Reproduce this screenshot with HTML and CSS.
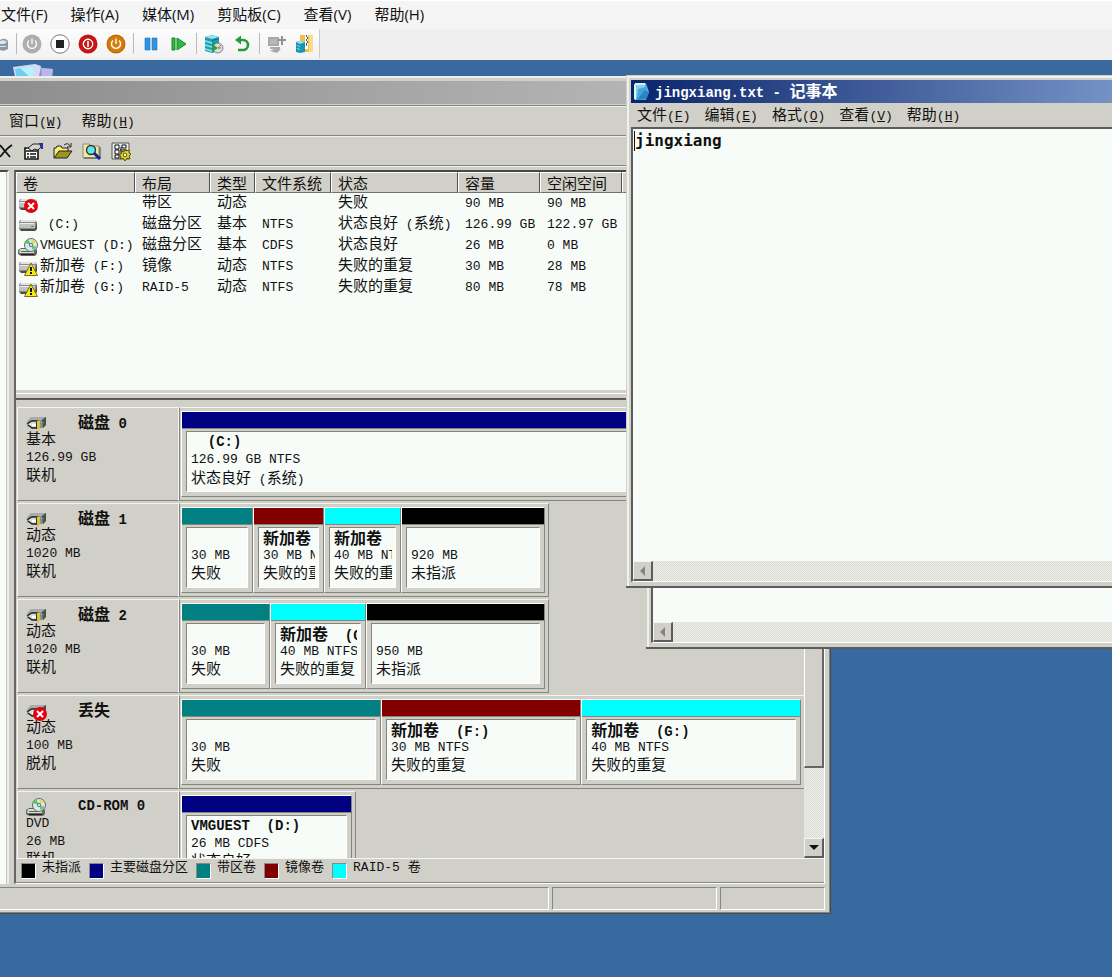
FILE: index.html
```html
<!DOCTYPE html>
<html lang="zh-CN">
<head>
<meta charset="utf-8">
<title>磁盘管理</title>
<link rel="stylesheet" href="styles.css">
</head>
<body>
<svg class="defs" aria-hidden="true">
  <symbol id="disk" viewBox="0 0 20 17">
    <path d="M2 3h15l2 2v7l-2 2H3l-2-2V5z" fill="#8a8a8a"/>
    <path d="M3 3h14l1 2H2z" fill="#e2e2e2"/>
    <path d="M1 6h16v5H2L1 10z" fill="#c2c2c2"/>
    <path d="M2 6h14v1H2z" fill="#efefef"/>
    <path d="M2 12h15l2-7v7l-2 2H3z" fill="#4b4b4b"/>
    <path d="M13 9h3v1h-3z" fill="#2fae3c"/>
  </symbol>
  <symbol id="hdd" viewBox="0 0 21 15">
    <path d="M5 1h15v8l-3 3H7l-6-2V6z" fill="#8d918d"/>
    <path d="M5 1h14l-3 3H3z" fill="#a9ada9"/>
    <path d="M16 4l4-3v8l-3 3z" fill="#4c4c4c"/>
    <path d="M1 8l5-3h7v6H6z" fill="#dcdedc"/>
    <path d="M1 8l5-3h6M2 9l4 3h5" fill="none" stroke="#222" stroke-width="1.300"/>
    <path d="M6 8h4v2H6z" fill="#fff"/>
    <path d="M11 5h3v8l-3 1z" fill="#d9c23c"/>
    <path d="M10 6h1v7h-1z" fill="#333"/>
    <path d="M15 6h3v1h-3z" fill="#54b260"/>
  </symbol>
  <symbol id="cd" viewBox="0 0 20 18">
    <path d="M3 10h14l2 2v4l-2 2H3l-3-2v-4z" fill="#666"/>
    <path d="M2 11h14v4H1z" fill="#d8d8d8"/>
    <path d="M3 13h9v1H3z" fill="#159c2e"/>
    <path d="M3 16h13v1H3z" fill="#222"/>
    <circle cx="13" cy="7" r="6.500" fill="#dfe7e4" stroke="#666"/>
    <path d="M13 7L7 5l3-4z" fill="#4dd05b"/>
    <path d="M13 7l1-6 4 3z" fill="#e9dc52"/>
    <path d="M13 7l6 2-4 4z" fill="#6fc47a"/>
    <circle cx="13" cy="7" r="2" fill="#3a6fc0"/>
    <circle cx="13" cy="7" r="1" fill="#fff"/>
  </symbol>
  <symbol id="error" viewBox="0 0 14 14">
    <circle cx="7" cy="7" r="7" fill="#e3000f"/>
    <path d="M4 4l6 6M10 4l-6 6" stroke="#fff" stroke-width="2"/>
  </symbol>
  <symbol id="warn" viewBox="0 0 14 14">
    <path d="M7 1l6.500 12.500H.5z" fill="#f6ea1b" stroke="#77730a"/>
    <path d="M6 5h2v4H6zM6 10h2v2H6z" fill="#111"/>
  </symbol>
</svg>

<header class="host">
  <nav class="host-menu">
    <button>文件(F)</button><button>操作(A)</button><button>媒体(M)</button><button>剪贴板(C)</button><button>查看(V)</button><button>帮助(H)</button>
  </nav>
  <div class="host-tools">
    <div class="host-strip">
      <button class="cut" aria-label="Ctrl+Alt+Del"><svg width="9" height="16" viewBox="0 0 9 16"><path d="M0 4q5-3 8 1v8q-4 3-8 1z" fill="#8b98a8"/><path d="M0 5q4-2 7 1l-3 2H0zM0 10h6v1H0z" fill="#dfe6ee"/></svg></button>
      <i class="sep"></i>
      <button aria-label="启动"><svg width="20" height="20" viewBox="0 0 20 20"><circle cx="10" cy="10" r="9.500" fill="#aeaeae"/><path d="M7 6.500a4.500 4.500 0 1 0 6 0M10 4.500V10" fill="none" stroke="#fff" stroke-width="1.300"/></svg></button>
      <button aria-label="强行关闭"><svg width="20" height="20" viewBox="0 0 20 20"><circle cx="10" cy="10" r="9.200" fill="#fff" stroke="#777"/><path d="M6 6h8v8H6z" fill="#222"/></svg></button>
      <button aria-label="关闭"><svg width="20" height="20" viewBox="0 0 20 20"><circle cx="10" cy="10" r="9.500" fill="#c41616"/><circle cx="10" cy="10" r="4.700" fill="none" stroke="#fff" stroke-width="1.400"/><path d="M9.200 7h1.600v6H9.200z" fill="#fff"/></svg></button>
      <button aria-label="保存"><svg width="20" height="20" viewBox="0 0 20 20"><circle cx="10" cy="10" r="9.500" fill="#d67c0c"/><circle cx="10" cy="10" r="8.600" fill="none" stroke="#b96604"/><path d="M7 6.500a4.500 4.500 0 1 0 6 0M10 4.500V10" fill="none" stroke="#fff" stroke-width="1.400"/></svg></button>
      <i class="sep"></i>
      <button aria-label="暂停"><svg width="14" height="14" viewBox="0 0 14 14"><path d="M1 1h5v12H1zM8 1h5v12H8z" fill="#2f93e0" stroke="#1f74bd" stroke-width=".6"/></svg></button>
      <button aria-label="重置"><svg width="16" height="14" viewBox="0 0 16 14"><path d="M1 1h3v12H1zM6 1l9 6-9 6z" fill="#2fb83c" stroke="#128a25"/></svg></button>
      <i class="sep"></i>
      <button aria-label="检查点"><svg width="20" height="20" viewBox="0 0 20 20"><path d="M1 3l7-2 7 2v14l-7 2-7-2z" fill="#1d9bb0"/><path d="M1 3l7 2 7-2-7-2z" fill="#9be4ea"/><path d="M1 6l7 2v2L1 8zM1 10l7 2v2l-7-2zM1 14l7 2v2l-7-2z" fill="#79dbe4"/><path d="M8 6l7-2v1L8 7zM8 10l7-2v1l-7 2z" fill="#0c6f82"/><circle cx="14" cy="14" r="5" fill="#dadada" stroke="#888"/><path d="M8 10l6 4-6 4z" fill="#23a537"/><path d="M14 14l3-3M14 14h3" stroke="#c66"/></svg></button>
      <button aria-label="还原"><svg width="16" height="18" viewBox="0 0 16 18"><path d="M5 5h4a4.500 4.500 0 0 1 0 10H4" fill="none" stroke="#2a9a35" stroke-width="2.600"/><path d="M1 5l6-4.500v9z" fill="#2a9a35"/></svg></button>
      <i class="sep"></i>
      <button aria-label="增强会话"><svg width="20" height="20" viewBox="0 0 20 20"><path d="M1 3h11v9H1zM3 13h10v2H3zM9 14l5 1-4 4-7-2z" fill="#a9a9a9"/><path d="M3 5h7v5H3z" fill="#b8b8b8"/><path d="M14 2h2v3h3v2h-3v4h-2V7h-3V5h3z" fill="#929292"/></svg></button>
      <button aria-label="共享"><svg width="20" height="20" viewBox="0 0 20 20"><path d="M5 1h13v17H5z" fill="#efbf4a"/><path d="M14 1h4v17h-4z" fill="#f8dc8c"/><path d="M10 1h3v14h-3z" fill="#fff"/><path d="M11 1h1v2h-1zM12 3h1v2h-1zM11 5h1v2h-1zM12 7h1v2h-1zM11 9h1v3h-1z" fill="#555"/><path d="M1 8l4-1 5 1v10l-5 1-4-1z" fill="#1795b3"/><path d="M1 8l4-1 5 1-5 2z" fill="#a0e3ec"/><path d="M2 11l3 1v1l-3-1zM2 14l3 1v1l-3-1z" fill="#8be0ea"/></svg></button>
    </div>
  </div>
</header>

<main class="desktop">
  <svg class="my-computer" width="42" height="30" viewBox="0 0 42 30"><path d="M22 4l18 2-3 20-14 4z" fill="#8f8fd0"/><path d="M28 5l12 1-2 20-8 2z" fill="#b9b6ea"/><path d="M0 4l22-3 6 2-4 20L4 24z" fill="#d8d8f4"/><path d="M2 6l20-3-3 18-14 2z" fill="#6fcdf0"/><path d="M7 5l15-2-2 14z" fill="#b6f1fb"/></svg>

  <section class="mmc" aria-label="磁盘管理">
    <div class="mmc-title"></div>
    <nav class="mmc-menu row-edge">
      <button><span class="zh">窗口</span>(<u>W</u>)</button><button><span class="zh">帮助</span>(<u>H</u>)</button>
    </nav>
    <div class="mmc-tools row-edge">
      <button class="half" aria-label="删除"><svg width="13" height="18" viewBox="0 0 13 18"><path d="M0 3l10 12M12 3C7 6 4 10 0 15" fill="none" stroke="#111" stroke-width="1.800"/></svg></button>
      <button aria-label="属性"><svg width="20" height="18" viewBox="0 0 20 18"><path d="M1 6h13v11H1z" fill="#fff" stroke="#111" stroke-width="1.600"/><path d="M2 9h11M3 12h2M6 12h6M3 15h2M6 15h6" stroke="#111" stroke-width="1.400"/><path d="M4 6l5-4h7l2 2-4 4-4-1-2 2z" fill="#d8d4c4" stroke="#222"/><path d="M15 1h4v6h-2z" fill="#23349c"/></svg></button>
      <button aria-label="打开"><svg width="20" height="18" viewBox="0 0 20 18"><path d="M1 16V6h2l1-2h4l1 2h6v3" fill="#f3ec7a" stroke="#222"/><path d="M1 16l5-7h13l-5 7z" fill="#9b961b" stroke="#222"/><path d="M11 3q4-3 6 1M18 1v4h-4" fill="none" stroke="#222"/></svg></button>
      <button aria-label="查找"><svg width="20" height="18" viewBox="0 0 20 18"><path d="M1 16V2h6l2 2h8v12z" fill="#f1ea9d" stroke="#888"/><path d="M2 16h16V5" fill="none" stroke="#444"/><circle cx="9" cy="8" r="4.500" fill="#65e3ea" stroke="#333" stroke-width="1.400"/><path d="M12 11l6 6" stroke="#15209b" stroke-width="3"/></svg></button>
      <button aria-label="设置"><svg width="20" height="19" viewBox="0 0 20 19"><path d="M1 1h17v16H1z" fill="#e9e9e9" stroke="#555"/><path d="M4 3h4v4H4zM4 8h4v4H4zM4 13h4v3H4zM11 3h4v3h-4z" fill="#fff" stroke="#111"/><path d="M9 8h7M10 5v7" stroke="#111"/><path d="M14 7l1 2 3-1v3l2 1-2 2 1 3-3-1-2 3-2-3-3 1 1-3-2-1 3-2-1-2 3 1z" fill="#e7d828" stroke="#5d5708"/><circle cx="14" cy="13" r="1.800" fill="#fff" stroke="#5d5708"/></svg></button>
    </div>
    <div class="work row-edge">
      <div class="tree"></div>
      <div class="pane">
        <div class="list">
          <table>
            <colgroup><col class="c1"><col class="c2"><col class="c3"><col class="c4"><col class="c5"><col class="c6"><col class="c7"><col></colgroup>
            <thead><tr><th>卷</th><th>布局</th><th>类型</th><th>文件系统</th><th>状态</th><th>容量</th><th>空闲空间</th><th></th></tr></thead>
            <tbody>
              <tr><td><span class="vol-ico"><svg width="20" height="17"><use href="#disk"/></svg><svg class="mark" width="14" height="14"><use href="#error"/></svg></span></td><td><span class="zh">带区</span></td><td><span class="zh">动态</span></td><td></td><td><span class="zh">失败</span></td><td>90 MB</td><td>90 MB</td><td></td></tr>
              <tr><td><span class="vol-ico"><svg width="20" height="17"><use href="#disk"/></svg></span> (C:)</td><td><span class="zh">磁盘分区</span></td><td><span class="zh">基本</span></td><td>NTFS</td><td><span class="zh">状态良好</span> (<span class="zh">系统</span>)</td><td>126.99 GB</td><td>122.97 GB</td><td></td></tr>
              <tr><td><span class="vol-ico"><svg width="20" height="18"><use href="#cd"/></svg></span>VMGUEST (D:)</td><td><span class="zh">磁盘分区</span></td><td><span class="zh">基本</span></td><td>CDFS</td><td><span class="zh">状态良好</span></td><td>26 MB</td><td>0 MB</td><td></td></tr>
              <tr><td><span class="vol-ico"><svg width="20" height="17"><use href="#disk"/></svg><svg class="mark" width="14" height="14"><use href="#warn"/></svg></span><span class="zh">新加卷</span> (F:)</td><td><span class="zh">镜像</span></td><td><span class="zh">动态</span></td><td>NTFS</td><td><span class="zh">失败的重复</span></td><td>30 MB</td><td>28 MB</td><td></td></tr>
              <tr><td><span class="vol-ico"><svg width="20" height="17"><use href="#disk"/></svg><svg class="mark" width="14" height="14"><use href="#warn"/></svg></span><span class="zh">新加卷</span> (G:)</td><td>RAID-5</td><td><span class="zh">动态</span></td><td>NTFS</td><td><span class="zh">失败的重复</span></td><td>80 MB</td><td>78 MB</td><td></td></tr>
            </tbody>
          </table>
        </div>
        <div class="splitter"></div>
        <div class="graph">
          <div class="disks">
            <article class="disk">
              <div class="disk-head"><h3><span class="disk-ico"><svg width="21" height="15"><use href="#hdd"/></svg></span><span class="zh">磁盘</span> 0</h3><p class="zh">基本</p><p>126.99 GB</p><p class="zh">联机</p></div>
              <div class="vols fill">
                <div class="vol navy" style="flex:620"><div class="body"><div class="info"><h4>  (C:)</h4><p>126.99 GB NTFS</p><p><span class="zh">状态良好</span> (<span class="zh">系统</span>)</p></div></div></div>
              </div>
            </article>
            <article class="disk">
              <div class="disk-head"><h3><span class="disk-ico"><svg width="21" height="15"><use href="#hdd"/></svg></span><span class="zh">磁盘</span> 1</h3><p class="zh">动态</p><p>1020 MB</p><p class="zh">联机</p></div>
              <div class="vols">
                <div class="vol teal" style="width:72px"><div class="body"><div class="info"><h4></h4><p>30 MB</p><p class="zh">失败</p></div></div></div>
                <div class="vol maroon" style="width:71px"><div class="body"><div class="info"><h4><span class="zh">新加卷</span></h4><p>30 MB NTFS</p><p class="zh">失败的重复</p></div></div></div>
                <div class="vol cyan" style="width:77px"><div class="body"><div class="info"><h4><span class="zh">新加卷</span></h4><p>40 MB NTFS</p><p class="zh">失败的重复</p></div></div></div>
                <div class="vol black" style="width:144px"><div class="body"><div class="info"><h4></h4><p>920 MB</p><p class="zh">未指派</p></div></div></div>
              </div>
            </article>
            <article class="disk">
              <div class="disk-head"><h3><span class="disk-ico"><svg width="21" height="15"><use href="#hdd"/></svg></span><span class="zh">磁盘</span> 2</h3><p class="zh">动态</p><p>1020 MB</p><p class="zh">联机</p></div>
              <div class="vols">
                <div class="vol teal" style="width:89px"><div class="body"><div class="info"><h4></h4><p>30 MB</p><p class="zh">失败</p></div></div></div>
                <div class="vol cyan" style="width:96px"><div class="body"><div class="info"><h4><span class="zh">新加卷</span>  (G:)</h4><p>40 MB NTFS</p><p class="zh">失败的重复</p></div></div></div>
                <div class="vol black" style="width:179px"><div class="body"><div class="info"><h4></h4><p>950 MB</p><p class="zh">未指派</p></div></div></div>
              </div>
            </article>
            <article class="disk">
              <div class="disk-head"><h3><span class="disk-ico"><svg width="21" height="15"><use href="#hdd"/></svg><svg class="mark" width="14" height="14"><use href="#error"/></svg></span><span class="zh">丢失</span></h3><p class="zh">动态</p><p>100 MB</p><p class="zh">脱机</p></div>
              <div class="vols fill">
                <div class="vol teal" style="flex:200"><div class="body"><div class="info"><h4></h4><p>30 MB</p><p class="zh">失败</p></div></div></div>
                <div class="vol maroon" style="flex:200"><div class="body"><div class="info"><h4><span class="zh">新加卷</span>  (F:)</h4><p>30 MB NTFS</p><p class="zh">失败的重复</p></div></div></div>
                <div class="vol cyan" style="flex:220"><div class="body"><div class="info"><h4><span class="zh">新加卷</span>  (G:)</h4><p>40 MB NTFS</p><p class="zh">失败的重复</p></div></div></div>
              </div>
            </article>
            <article class="disk">
              <div class="disk-head"><h3><span class="disk-ico"><svg width="20" height="18"><use href="#cd"/></svg></span>CD-ROM 0</h3><p>DVD</p><p>26 MB</p><p class="zh">联机</p></div>
              <div class="vols">
                <div class="vol navy" style="width:171px"><div class="body"><div class="info"><h4>VMGUEST  (D:)</h4><p>26 MB CDFS</p><p class="zh">状态良好</p></div></div></div>
              </div>
            </article>
          </div>
          <div class="vscroll">
            <div class="thumb"></div>
            <button class="knob" aria-label="向下滚动"><svg width="10" height="5" viewBox="0 0 10 5"><path d="M0 0h10L5 5z" fill="#111"/></svg></button>
          </div>
        </div>
        <ul class="legend">
          <li><i class="black"></i>未指派</li><li><i class="navy"></i>主要磁盘分区</li><li><i class="teal"></i>带区卷</li><li><i class="maroon"></i>镜像卷</li><li><i class="cyan"></i>RAID-5 卷</li>
        </ul>
      </div>
    </div>
    <footer class="status"><span class="s1"></span><span class="s2"></span><span class="s3"></span></footer>
  </section>

  <section class="notepad back" aria-label="记事本">
    <div class="client"><div class="page"></div>
      <div class="hscroll"><button class="knob" aria-label="向左滚动"><svg width="5" height="10" viewBox="0 0 5 10"><path d="M5 0v10L0 5z" fill="#848484"/></svg></button></div>
    </div>
  </section>

  <section class="notepad front" aria-label="jingxiang.txt">
    <h2 class="np-title"><svg width="17" height="19" viewBox="0 0 17 19"><path d="M1 2l12-1 3 9-3 8H2z" fill="#4aaee0"/><path d="M2 3l10-1 1 12-10 2z" fill="#7fd0f0"/><path d="M5 7l8-2v10l-9 2z" fill="#3fa5dc"/><path d="M12 8l4 3-3 6-9 1z" fill="#2b83c4"/><path d="M1 2v15l2 1V4z" fill="#e3f6df"/><path d="M2 1h10v2H2z" fill="#e8f0e4"/></svg><span>jingxiang.txt - <span class="zh">记事本</span></span></h2>
    <nav class="np-menu">
      <button><span class="zh">文件</span>(<u>F</u>)</button><button><span class="zh">编辑</span>(<u>E</u>)</button><button><span class="zh">格式</span>(<u>O</u>)</button><button><span class="zh">查看</span>(<u>V</u>)</button><button><span class="zh">帮助</span>(<u>H</u>)</button>
    </nav>
    <div class="client">
      <textarea class="page" aria-label="文本" spellcheck="false">jingxiang</textarea>
      <i class="caret"></i>
      <div class="hscroll"><button class="knob" aria-label="向左滚动"><svg width="5" height="10" viewBox="0 0 5 10"><path d="M5 0v10L0 5z" fill="#848484"/></svg></button></div>
    </div>
  </section>
</main>
</body>
</html>
```
FILE: styles.css
```css
:root {
  --face: #d1d0c8;
  --light: #f8fcf9;
  --shade: #858580;
  --dark: #484848;
  --mono: "Liberation Mono", "Noto Sans CJK SC", monospace;
}

* { box-sizing: border-box; }

body {
  margin: 0;
  height: 100vh;
  display: flex;
  flex-direction: column;
  overflow: hidden;
  font: 13px/18px var(--mono);
  color: #111;
}

button {
  margin: 0;
  padding: 0;
  border: 0;
  background: none;
  font: inherit;
  color: inherit;
}

h2, h3, h4, p, ul { margin: 0; padding: 0; }
svg { display: block; }
.defs { position: absolute; width: 0; height: 0; }

.zh {
  font-family: "Noto Sans CJK SC", sans-serif;
  font-size: 15px;
}
span.zh { line-height: 1; }
p { height: 18px; }
p.zh { line-height: 14px; }

/* Virtual machine console bars */
.host-menu {
  display: flex;
  gap: 23px;
  height: 29px;
  padding: 1px 1px 0;
  border-top: 1px solid #fff;
  background: #f5f5f5;
  font: 15px/24px "Open Sans", "Noto Sans CJK SC", sans-serif;
}
.host-menu button { height: 24px; }
.host-tools {
  height: 31px;
  background: #efefef;
}
.host-strip {
  display: flex;
  align-items: center;
  width: 320px;
  height: 29px;
  border-right: 1px solid #ccc;
  background: linear-gradient(#fcfcfc, #f2f2f2);
}
.host-strip button {
  display: flex;
  justify-content: center;
  width: 28px;
}
.host-strip .cut { width: 13px; justify-content: flex-start; }
.sep {
  width: 1px;
  height: 21px;
  margin: 0 3px;
  background: #b9b9b9;
}
.cut + .sep { margin: 0 1px 0 3px; }

/* Desktop */
.desktop {
  position: relative;
  flex: 1;
  overflow: hidden;
  background: #386a9f;
}
.my-computer { position: absolute; left: 13px; top: 3px; }

/* Disk management console */
.mmc {
  position: absolute;
  left: 0;
  top: 16px;
  width: 831px;
  height: 838px;
  display: flex;
  flex-direction: column;
  border-top: 2px solid #efefeb;
  border-right: 1px solid var(--dark);
  border-bottom: 1px solid var(--dark);
  box-shadow: inset -1px -1px var(--shade);
  padding: 3px 5px 1px 0;
  background: var(--face);
}
.mmc-title {
  height: 23px;
  margin-bottom: 1px;
  background: linear-gradient(90deg, #8e8e8e, #c0c0c0);
}
.row-edge {
  border-top: 1px solid var(--shade);
  box-shadow: inset 0 1px #f0f0ec;
}
.mmc-menu {
  display: flex;
  gap: 19px;
  height: 30px;
  padding: 2px 9px 0;
}
.mmc-tools {
  display: flex;
  align-items: center;
  height: 30px;
  padding-top: 1px;
}
.mmc-tools button {
  display: flex;
  justify-content: center;
  width: 29px;
}
.mmc-tools .half { width: 19px; justify-content: flex-start; }

.work {
  flex: 1;
  min-height: 0;
  display: flex;
  gap: 5px;
  padding-top: 4px;
}
.tree {
  width: 9px;
  border-top: 2px solid var(--dark);
  border-right: 2px solid #ecece8;
  box-shadow: inset -1px 0 #c4c4be;
  background: var(--light);
}
.pane {
  flex: 1;
  min-width: 0;
  display: flex;
  flex-direction: column;
  border: solid;
  border-width: 2px 1px 1px 2px;
  border-color: var(--dark) #fff #fff #666;
}

.list {
  height: 218px;
  background: var(--light);
}
table {
  width: 100%;
  table-layout: fixed;
  border-collapse: separate;
  border-spacing: 0;
}
.c1 { width: 119px; }
.c2 { width: 75px; }
.c3 { width: 45px; }
.c4 { width: 76px; }
.c5 { width: 127px; }
.c6, .c7 { width: 82px; }
th {
  height: 21px;
  padding: 0 0 0 6px;
  border: 1px solid;
  border-color: #fff #505050 #707070 #fff;
  background: var(--face);
  font: 15px/18px "Noto Sans CJK SC", sans-serif;
  text-align: left;
  white-space: nowrap;
}
td {
  height: 21px;
  padding: 0 0 0 7px;
  line-height: 21px;
  white-space: pre;
}
td:first-child { padding-left: 2px; }
.vol-ico, .disk-ico {
  position: relative;
  display: inline-block;
  width: 20px;
  height: 16px;
  margin-right: 2px;
  vertical-align: middle;
}
.mark { position: absolute; right: 0; top: 3px; }

.splitter {
  height: 10px;
  border-top: 3px solid var(--face);
  border-bottom: 2px solid #5a5a5a;
  box-shadow: inset 0 1px #fff;
}

.graph {
  flex: 1;
  min-height: 0;
  display: flex;
}
.disks {
  flex: 1;
  min-width: 0;
  overflow: hidden;
  padding: 7px 0 0 1px;
  display: flex;
  flex-direction: column;
  gap: 2px;
}
.disk {
  flex: none;
  display: flex;
  white-space: pre;
}
.disk-head {
  width: 162px;
  flex: none;
  padding: 5px 0 0 8px;
  border: 1px solid #f4f4f0;
  border-bottom-color: var(--shade);
}
h3, h4 {
  height: 18px;
  font-size: 14px;
  line-height: 18px;
}
h3 .zh, h4 .zh { font-size: 16px; }
.disk-ico { width: 21px; margin-right: 31px; }
.vols {
  display: flex;
  padding: 3px 3px 3px 1px;
  border: 1px solid var(--shade);
  border-top-color: #f4f4f0;
}
.fill { flex: 1; border-right: 0; }
.vol {
  flex: none;
  min-width: 0;
  padding-top: 16px;
  border: 1px solid var(--shade);
  border-top-color: #fff;
  border-left-color: #fff;
}
.body {
  padding: 2px 4px 4px;
  border-top: 1px solid var(--shade);
  background: var(--face);
}
.info {
  padding: 1px 3px 4px 4px;
  border: 1px solid var(--shade);
  border-right-color: #fff;
  border-bottom-color: #fff;
  background: var(--light);
}
.info > * { overflow: hidden; }
.navy { background: #000080; }
.teal { background: #008080; }
.maroon { background: #800000; }
.cyan { background: #00ffff; }
.black { background: #000; }

.vscroll, .hscroll {
  background: repeating-conic-gradient(#eceee8 0 25%, #dcdcd5 0 50%) 0 0 / 2px 2px;
}
.vscroll {
  width: 20px;
  display: flex;
  flex-direction: column;
  justify-content: space-between;
}
.thumb {
  height: 368px;
  border: 1px solid #fff;
  border-right: 2px solid #666;
  border-bottom: 2px solid #666;
  background: var(--face);
}
.knob {
  display: flex;
  align-items: center;
  justify-content: center;
  width: 20px;
  height: 20px;
  border: 1px solid #f4f4f0;
  border-right: 2px solid #5c5c5c;
  border-bottom: 2px solid #5c5c5c;
  background: var(--face);
}

.legend {
  display: flex;
  gap: 8px;
  height: 25px;
  padding: 0 5px;
  border-top: 1px solid #f4f4f0;
  border-bottom: 1px solid var(--shade);
  list-style: none;
}
.legend li {
  display: flex;
  gap: 6px;
}
.legend i {
  width: 15px;
  height: 16px;
  margin-top: 4px;
  border: 1px solid #888;
  border-right-color: #fff;
  border-bottom-color: #fff;
}

.status {
  display: flex;
  gap: 3px;
  height: 28px;
  padding: 3px 0 2px;
}
.status span {
  border: 1px solid var(--shade);
  border-right-color: #fff;
  border-bottom-color: #fff;
}
.status .s1 { flex: 551; border-left: 0; }
.s2 { flex: 163; }
.s3 { flex: 104; }

/* Notepad windows */
.notepad {
  position: absolute;
  right: 0;
  display: flex;
  flex-direction: column;
  padding: 5px 0 4px 5px;
  border-bottom: 2px solid #5c5c5c;
  box-shadow: inset 1px 1px var(--face), inset 3px 3px #f0f0ec;
  background: var(--face);
}
.front { left: 626px; top: 15px; height: 513px; }
.back { left: 646px; top: 75px; height: 514px; }
.np-title {
  display: flex;
  align-items: center;
  gap: 5px;
  height: 23px;
  padding-left: 2px;
  background: linear-gradient(90deg, #0a246a, #7592c6);
  color: #fff;
  font-size: 14px;
  white-space: pre;
}
.np-title .zh { font-size: 16px; }
.np-menu {
  display: flex;
  gap: 14px;
  height: 24px;
  padding: 2px 6px 0;
}
.client {
  position: relative;
  flex: 1;
  min-height: 0;
  display: flex;
  flex-direction: column;
  border: solid;
  border-width: 2px 0 1px 2px;
  border-color: #5c5c5c #fff #fff #5c5c5c;
}
.page {
  flex: 1;
  margin: 0;
  padding: 2px;
  border: 0;
  outline: 0;
  resize: none;
  background: var(--light);
  color: #111;
  font: bold 16px/20px "DejaVu Sans Mono", monospace;
}
.caret {
  position: absolute;
  left: 1px;
  top: 2px;
  width: 1px;
  height: 20px;
  background: #111;
}
.hscroll { height: 20px; }
```
